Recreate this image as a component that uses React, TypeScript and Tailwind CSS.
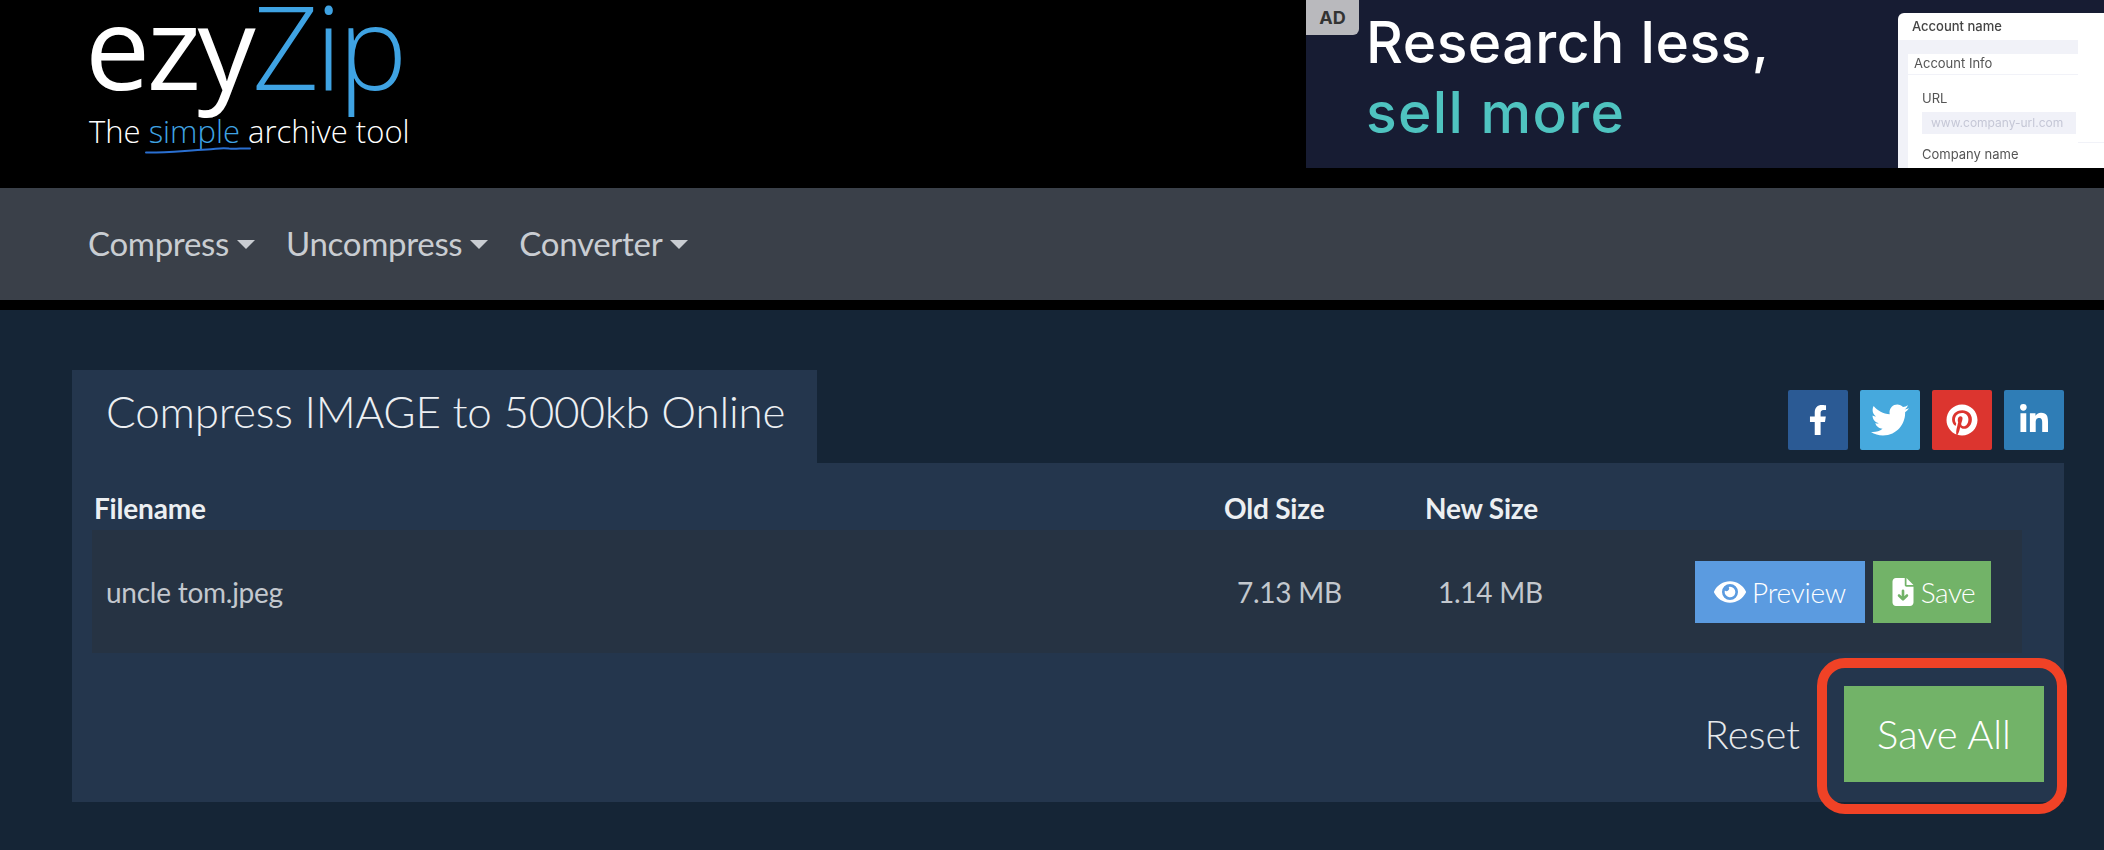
import type { ReactNode } from 'react';
import { FaEye, FaFacebookF, FaTwitter, FaPinterest, FaLinkedinIn } from 'react-icons/fa';
import { FaFileArrowDown } from 'react-icons/fa6';

function NavItem({ label }: { label: string }) {
  return (
    <a className="flex items-center text-[33px] tracking-[-0.3px] text-[#c9cdd2]">
      {label}
      <span className="ml-[8px] mt-[1px] h-0 w-0 border-x-[9px] border-t-[9px] border-x-transparent border-t-[#c9cdd2]" />
    </a>
  );
}

function SocialButton({ bg, children }: { bg: string; children: ReactNode }) {
  return (
    <a className={`flex h-[60px] w-[60px] items-center justify-center rounded-[2px] text-white ${bg}`}>
      {children}
    </a>
  );
}

function AdBanner() {
  return (
    <div className="relative flex h-[168px] w-[798px] overflow-hidden bg-[#171c33] font-['Inter',sans-serif]">
      <div className="absolute left-0 top-0 flex h-[35px] w-[53px] items-center justify-center rounded-br-md bg-[#b9b9bd] text-[18px] font-bold text-[#333]">
        AD
      </div>
      <div className="ml-[60px] flex w-[532px] flex-col">
        <div className="mt-[9px] text-[57px] font-medium leading-[68px] tracking-[0.5px] text-white">Research less,</div>
        <div className="mt-[2px] text-[57px] font-medium leading-[68px] tracking-[1.3px] text-[#4fc3c0]">sell more</div>
      </div>
      {/* screenshot of a form inside the ad */}
      <div className="mt-[13px] flex flex-1 flex-col rounded-tl-md bg-white blur-[0.6px]">
        <div className="flex h-[27px] items-center pl-[14px] text-[13px] font-medium text-[#444]">Account name</div>
        <div className="flex flex-1">
          <div className="w-[180px] bg-[#f1f2f8] pl-[10px] pt-[14px]">
            <div className="h-full bg-white">
              <div className="flex h-[21px] items-center border-b border-[#f1f2f8] pl-[6px] text-[13px] text-[#555]">Account Info</div>
              <div className="pl-[14px] pt-[15px] text-[13px] leading-[16px] text-[#555]">URL</div>
              <div className="ml-[14px] mt-[6px] flex h-[22px] w-[154px] items-center bg-[#f0f1f8] pl-[9px] text-[12px] text-[#c5c7d6]">www.company-url.com</div>
              <div className="pl-[14px] pt-[12px] text-[13px] leading-[16px] text-[#555]">Company name</div>
            </div>
          </div>
          <div className="flex-1">
            <div className="h-[103px] border-b border-[#f1f2f8]" />
          </div>
        </div>
      </div>
    </div>
  );
}

export default function App() {
  return (
    <div className="flex h-[850px] w-[2104px] flex-col overflow-hidden bg-black font-['Lato',sans-serif]">
      {/* Header */}
      <header className="flex h-[188px] justify-between">
        <div className="ml-[85px] font-['Open_Sans',sans-serif] font-light">
          <div className="h-[90px] text-[116px] leading-[90px] tracking-[-3.5px]">
            <span className="font-normal text-white">ezy</span>
            <span className="text-[#3fa3e3]">Zip</span>
          </div>
          <div className="relative mt-[23px] pl-[4px] text-[31px] leading-[36px] text-white">
            The <span className="text-[#3fa3e3]">simple</span> archive tool
            <svg className="absolute left-[60px] top-[33px] h-[8px] w-[106px]" viewBox="0 0 106 8" fill="none">
              <path d="M1 6.5C22 6.8 40 4.6 62 3.6C72 3 76 1.4 84 2.6C90 3.2 97 2.2 105 2.4" stroke="#2a6fd0" strokeWidth="2" strokeLinecap="round" />
            </svg>
          </div>
        </div>
        <AdBanner />
      </header>

      {/* Nav */}
      <nav className="flex h-[112px] items-center gap-[31px] bg-[#3a4049] pl-[88px]">
        <NavItem label="Compress" />
        <NavItem label="Uncompress" />
        <NavItem label="Converter" />
      </nav>

      {/* Main */}
      <main className="mt-[10px] flex-1 bg-[#152536] pl-[72px] pr-[40px] pt-[60px]">
        <div className="flex h-[93px] items-start justify-between">
          <h1 className="flex h-[93px] w-[745px] items-start bg-[#24364d] pl-[34px] pt-[8px] text-[44px] font-light tracking-[-0.2px] text-[#eceff2]">
            Compress IMAGE to 5000kb Online
          </h1>
          <div className="mt-[20px] flex gap-[12px]">
            <SocialButton bg="bg-[#2b5a94]"><FaFacebookF size={30} /></SocialButton>
            <SocialButton bg="bg-[#46a9dd]"><FaTwitter size={38} /></SocialButton>
            <SocialButton bg="bg-[#dc352f]"><FaPinterest size={32} /></SocialButton>
            <SocialButton bg="bg-[#2f7db6]"><FaLinkedinIn size={32} /></SocialButton>
          </div>
        </div>

        <section className="relative h-[339px] bg-[#24364d] px-[20px]">
          <div className="grid h-[67px] grid-cols-[1130px_201px_1fr] items-end pb-[8px] pl-[2px] text-[28px] font-bold leading-none tracking-[-0.2px] text-[#eceff2]">
            <span>Filename</span>
            <span>Old Size</span>
            <span>New Size</span>
          </div>
          <div className="grid h-[123px] w-[1930px] grid-cols-[1131px_201px_257px_1fr] items-center bg-[#263343] pl-[14px] text-[28px] tracking-[-0.25px] text-[#c3c8ce]">
            <span>uncle tom.jpeg</span>
            <span>7.13 MB</span>
            <span>1.14 MB</span>
            <div className="flex gap-2 font-light text-white">
              <button className="flex h-[62px] w-[170px] items-center justify-center gap-[6px] bg-[#5b9be0] text-[28px]">
                <FaEye size={32} />Preview
              </button>
              <button className="flex h-[62px] w-[118px] items-center justify-center gap-[4px] bg-[#72b368] text-[28px] tracking-[-0.5px]">
                <FaFileArrowDown size={28} />Save
              </button>
            </div>
          </div>
          <div className="mt-[33px] flex items-center justify-end">
            <a className="mr-[44px] text-[40px] font-light text-[#e6e9ec]">Reset</a>
            <button className="h-[96px] w-[200px] bg-[#72b368] text-[40px] font-light text-white">Save All</button>
          </div>
          {/* red annotation ring */}
          <div className="absolute left-[1745px] top-[195px] h-[156px] w-[250px] rounded-[28px] border-[10px] border-[#f04226]" />
        </section>
      </main>
    </div>
  );
}
